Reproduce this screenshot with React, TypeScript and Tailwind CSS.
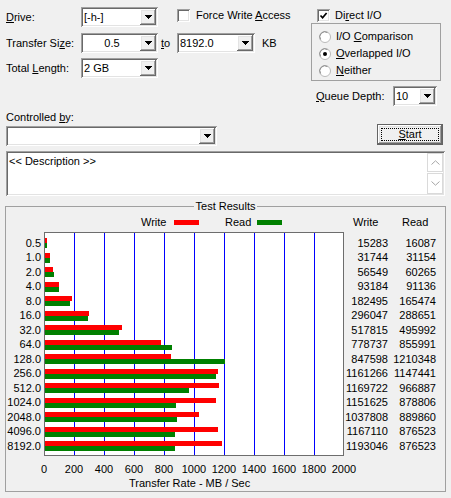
import React from "react";

const SUNKEN = "shadow-[inset_1px_1px_0_#a0a0a0,inset_-1px_-1px_0_#ffffff,inset_2px_2px_0_#696969,inset_-2px_-2px_0_#e3e3e3]";
const RAISED = "shadow-[inset_-1px_-1px_0_#696969,inset_1px_1px_0_#ffffff,inset_-2px_-2px_0_#a0a0a0,inset_2px_2px_0_#e3e3e3]";

const SIZES = ["0.5","1.0","2.0","4.0","8.0","16.0","32.0","64.0","128.0","256.0","512.0","1024.0","2048.0","4096.0","8192.0"];
const WRITE = [15283,31744,56549,93184,182495,296047,517815,778737,847598,1161266,1169722,1151625,1037808,1167110,1193046];
const READ  = [16087,31154,60265,91136,165474,288651,495992,855991,1210348,1147441,966887,878806,889860,876523,876523];
const GRID  = ["left-[29px]","left-[59px]","left-[89px]","left-[119px]","left-[149px]","left-[179px]","left-[209px]","left-[239px]","left-[269px]"];
const AXIS  = ["0","200","400","600","800","1000","1200","1400","1600","1800","2000"];

// values are KB/s, plot is ~300px for 2000 MB/s
const px = (v: number) => v * 0.0001486;

function DownArrow() {
  return (
    <svg width="7" height="4" viewBox="0 0 7 4" shapeRendering="crispEdges">
      <rect x="0" y="0" width="7" height="1" fill="#000" />
      <rect x="1" y="1" width="5" height="1" fill="#000" />
      <rect x="2" y="2" width="3" height="1" fill="#000" />
      <rect x="3" y="3" width="1" height="1" fill="#000" />
    </svg>
  );
}

function Combo({ value = "", className = "", center = false }: { value?: string; className?: string; center?: boolean }) {
  return (
    <div className={`flex h-[20px] items-center bg-white ${SUNKEN} ${className}`}>
      <span className={`flex-1 pl-[3px] ${center ? "text-center" : ""}`}>{value}</span>
      <div className={`mr-[2px] flex h-[16px] w-[16px] items-center justify-center bg-[#f0f0f0] ${RAISED}`}>
        <DownArrow />
      </div>
    </div>
  );
}

function Check({ checked = false }: { checked?: boolean }) {
  return (
    <div className={`flex h-[13px] w-[13px] shrink-0 items-center justify-center bg-white ${SUNKEN}`}>
      {checked && (
        <svg width="9" height="9" viewBox="0 0 9 9">
          <path d="M1.5 4.5 L3.6 6.8 L7.6 2" fill="none" stroke="#000" strokeWidth="1.7" />
        </svg>
      )}
    </div>
  );
}

function Radio({ checked = false }: { checked?: boolean }) {
  return (
    <svg width="12" height="12" viewBox="0 0 12 12" className="shrink-0">
      <circle cx="6" cy="6" r="5.5" fill="#fff" stroke="#b9b9b9" />
      <path d="M1.6 8.5 A5 5 0 0 1 8.5 1.6" fill="none" stroke="#8a8a8a" />
      {checked && <circle cx="6" cy="6" r="2" fill="#000" />}
    </svg>
  );
}

function Chevron({ up }: { up?: boolean }) {
  return (
    <svg width="9" height="5" viewBox="0 0 9 5">
      <path d={up ? "M0.5 4.5 L4.5 0.8 L8.5 4.5" : "M0.5 0.5 L4.5 4.2 L8.5 0.5"} fill="none" stroke="#a6a6a6" />
    </svg>
  );
}

export default function App() {
  return (
    <div className="h-[498px] w-[451px] overflow-hidden bg-[#f0f0f0] font-['Liberation_Sans',Arial,sans-serif] text-[11px] leading-[13px] text-black">
      {/* top controls */}
      <div className="flex h-[106px]">
        <div className="w-[311px] pl-[6px] pt-[7px]">
          <div className="flex h-[20px] items-center">
            <div className="w-[75px]"><u>D</u>rive:</div>
            <Combo className="w-[77px]" value="[-h-]" />
            <div className="ml-[19px] flex items-center self-start mt-[2px]">
              <Check />
              <span className="ml-[6px]">Force Write <u>A</u>ccess</span>
            </div>
          </div>
          <div className="mt-[6px] flex h-[20px] items-center">
            <div className="w-[75px]">Transfer Si<u>z</u>e:</div>
            <Combo className="w-[77px]" value="0.5" center />
            <div className="ml-[3px] w-[16px]"><u>t</u>o</div>
            <Combo className="w-[78px]" value="8192.0" />
            <div className="ml-[7px]">KB</div>
          </div>
          <div className="mt-[5px] flex h-[20px] items-center">
            <div className="w-[75px]">Total <u>L</u>ength:</div>
            <Combo className="w-[77px]" value="2 GB" />
          </div>
        </div>

        <div className="w-[130px]">
          <div className="ml-[6px] mt-[9px] flex h-[13px] items-center">
            <Check checked />
            <span className="ml-[5px]">Di<u>r</u>ect I/O</span>
          </div>
          <div className="mt-[1px] h-[58px] border border-[#a0a0a0] pl-[7px] pt-[4px]">
            <div className="flex h-[17px] items-center">
              <Radio />
              <span className="ml-[5px]">I/O <u>C</u>omparison</span>
            </div>
            <div className="flex h-[17px] items-center">
              <Radio checked />
              <span className="ml-[5px]"><u>O</u>verlapped I/O</span>
            </div>
            <div className="flex h-[17px] items-center">
              <Radio />
              <span className="ml-[5px]"><u>N</u>either</span>
            </div>
          </div>
          <div className="mt-[5px] flex items-center">
            <div className="ml-[5px] w-[77px]"><u>Q</u>ueue Depth:</div>
            <Combo className="w-[44px]" value="10" />
          </div>
        </div>
      </div>

      {/* controlled by + start */}
      <div className="mt-[5px] flex items-end px-[6px]">
        <div>
          <div className="h-[13px]">Controlled <u>b</u>y:</div>
          <Combo className="mt-[2px] w-[211px]" />
        </div>
        <button className={`mb-[1px] ml-auto mr-[2px] flex h-[21px] w-[66px] items-center justify-center border border-[#646464] bg-[#f0f0f0] p-[3px] ${RAISED}`}>
          <div className="flex h-full w-full items-center justify-center border border-dotted border-black">
            <span><u>S</u>tart</span>
          </div>
        </button>
      </div>

      {/* description */}
      <div className={`mx-[6px] mt-[5px] flex h-[45px] w-[439px] bg-white p-[2px] ${SUNKEN}`}>
        <div className="flex-1 pl-[1px] pt-[2px]">&lt;&lt; Description &gt;&gt;</div>
        <div className="flex w-[16px] flex-col">
          <div className="flex h-[19px] items-center justify-center border border-[#dadada]">
            <Chevron up />
          </div>
          <div className="mt-[1px] flex flex-1 items-center justify-center border border-[#dadada]">
            <Chevron />
          </div>
        </div>
      </div>

      {/* test results */}
      <div className="mx-[5px] mt-[10px] h-[286px] w-[441px] border border-[#a0a0a0]">
        <div className="-mt-[7px] flex justify-center">
          <span className="bg-[#f0f0f0] px-[2px]">Test Results</span>
        </div>

        <div className="mt-[2.5px] flex h-[13px] items-center">
          <div className="ml-[135px] w-[33px]">Write</div>
          <div className="h-[5px] w-[25px] bg-[#ff0000]" />
          <div className="w-[26px]" />
          <div className="w-[32px]">Read</div>
          <div className="h-[5px] w-[25px] bg-[#008000]" />
          <div className="w-[71px]" />
          <div className="w-[49px]">Write</div>
          <div>Read</div>
        </div>

        <div className="mt-[3.5px] flex items-start">
          <div className="w-[38px] pr-[3px] pt-[3.75px]">
            {SIZES.map(s => (
              <div key={s} className="flex h-[14.5px] items-center justify-end">{s}</div>
            ))}
          </div>

          <div className="relative h-[224px] w-[300px] overflow-hidden border border-[#6d6d6d] bg-white pt-[2.75px]">
            {GRID.map(g => (
              <div key={g} className={`absolute bottom-0 top-0 w-px bg-[#0000ff] ${g}`} />
            ))}
            {SIZES.map((s, i) => (
              <div key={s} className="relative flex h-[14.5px] flex-col justify-center">
                <div className="h-[5px] bg-[#ff0000]" style={{ width: px(WRITE[i]) }} />
                <div className="h-[5px] bg-[#008000]" style={{ width: px(READ[i]) }} />
              </div>
            ))}
          </div>

          <div className="w-[44px] pt-[3.75px] text-right">
            {WRITE.map((v, i) => (
              <div key={i} className="flex h-[14.5px] items-center justify-end">{v}</div>
            ))}
          </div>
          <div className="w-[48px] pt-[3.75px] text-right">
            {READ.map((v, i) => (
              <div key={i} className="flex h-[14.5px] items-center justify-end">{v}</div>
            ))}
          </div>
        </div>

        <div className="ml-[23px] mt-[6.5px] flex h-[13px]">
          {AXIS.map(a => (
            <div key={a} className="w-[30px] text-center">{a}</div>
          ))}
        </div>
        <div className="ml-[123px] mt-[1px]">Transfer Rate - MB / Sec</div>
      </div>
    </div>
  );
}
